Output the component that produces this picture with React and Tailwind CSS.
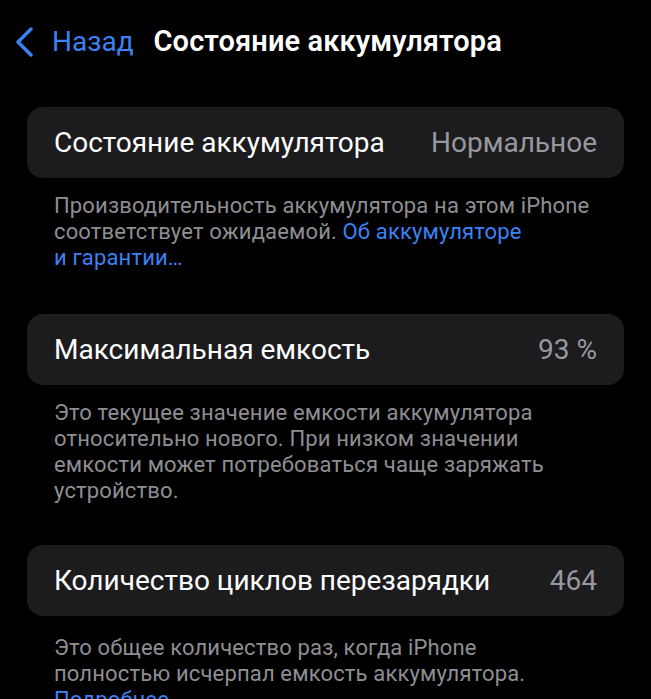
export default function App() {
  const font = { fontFamily: 'Roboto, "Noto Sans", sans-serif' }

  return (
    <div className="w-[651px] h-[699px] overflow-hidden bg-black text-white" style={font}>
      <div className="flex items-center h-[84px] pl-[15px]">
        <svg width="19" height="30" viewBox="0 0 19 30" className="shrink-0">
          <path d="M16 2 L3 15 L16 28" fill="none" stroke="#3b82f6" strokeWidth="3.4" strokeLinecap="round" strokeLinejoin="round" />
        </svg>
        <span className="ml-[18px] text-[28px] text-[#3b82f6]">Назад</span>
        <span className="ml-[20px] text-[29px] font-semibold tracking-[0.1px]">Состояние аккумулятора</span>
      </div>

      <div className="mt-[23px] px-[27px]">
        <Row label="Состояние аккумулятора" value="Нормальное" />
        <p className="px-[27px] pt-[15px] pb-[43px] text-[22px] leading-[26px] tracking-[0.15px] text-[#8e8e93]">
          Производительность аккумулятора на этом iPhone<br />
          соответствует ожидаемой. <span className="text-[#3b82f6]">Об аккумуляторе</span><br />
          <span className="text-[#3b82f6]">и гарантии…</span>
        </p>

        <Row label="Максимальная емкость" value="93 %" />
        <p className="px-[27px] pt-[15px] pb-[41px] text-[22px] leading-[26px] tracking-[0.15px] text-[#8e8e93]">
          Это текущее значение емкости аккумулятора<br />
          относительно нового. При низком значении<br />
          емкости может потребоваться чаще заряжать<br />
          устройство.
        </p>

        <Row label="Количество циклов перезарядки" value="464" />
        <p className="px-[27px] pt-[19px] text-[22px] leading-[26px] tracking-[0.15px] text-[#8e8e93]">
          Это общее количество раз, когда iPhone<br />
          полностью исчерпал емкость аккумулятора.<br />
          <span className="text-[#3b82f6]">Подробнее…</span>
        </p>
      </div>
    </div>
  )
}

function Row({ label, value }) {
  return (
    <div className="flex items-center justify-between h-[71px] px-[27px] rounded-[16px] bg-[#1c1c1e]">
      <span className="text-[28px]">{label}</span>
      <span className="text-[28px] text-[#98989e]">{value}</span>
    </div>
  )
}
